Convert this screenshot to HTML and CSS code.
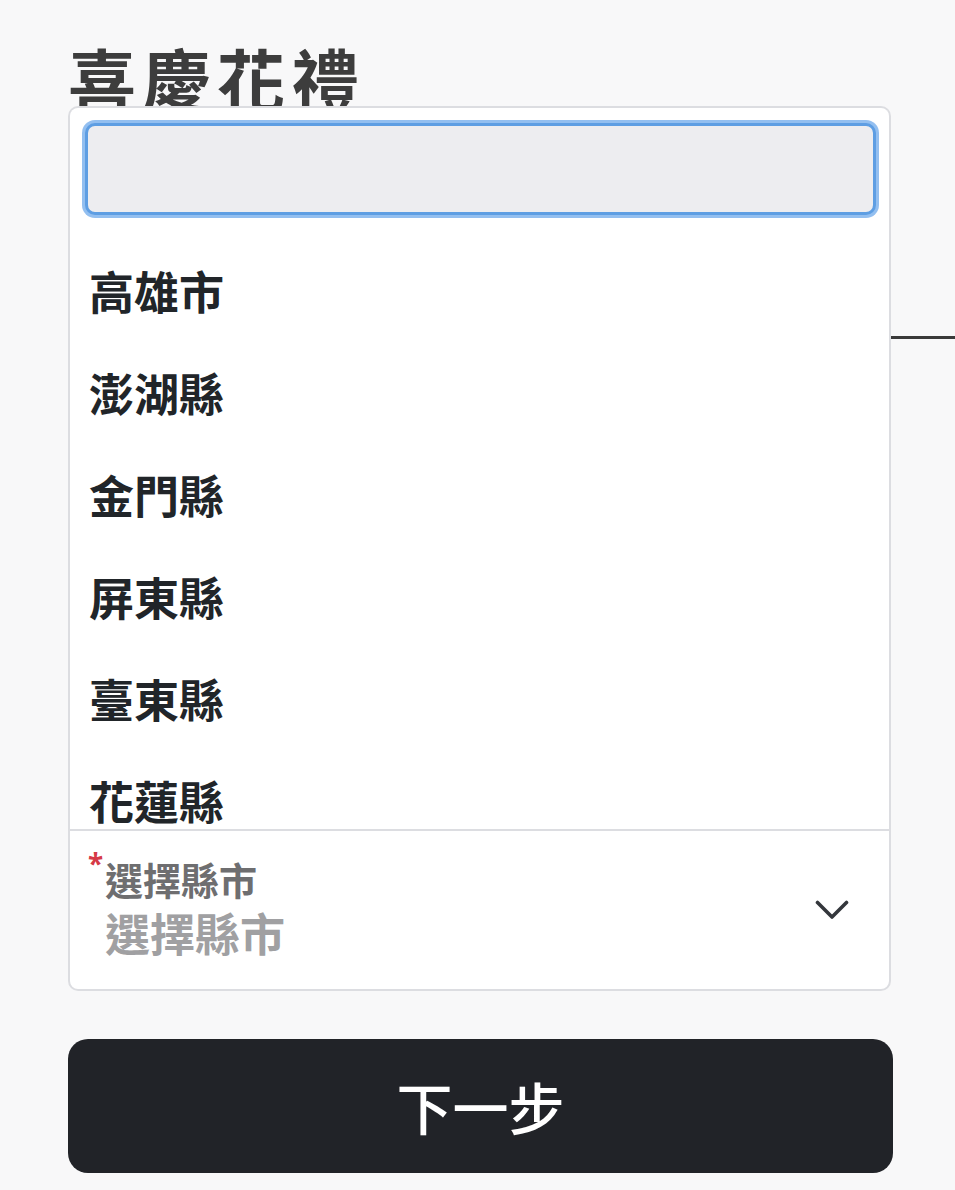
FILE: index.html
```html
<!DOCTYPE html>
<html lang="zh-Hant">
<head>
<meta charset="utf-8">
<title>喜慶花禮</title>
<link rel="stylesheet" href="styles.css">
</head>
<body>
<div class="page">
  <h1 class="title">喜慶花禮</h1>
  <div class="tab-line"></div>
  <div class="select">
    <div class="menu">
      <input class="search" type="text" aria-label="搜尋縣市">
      <ul class="options">
        <li>高雄市</li>
        <li>澎湖縣</li>
        <li>金門縣</li>
        <li>屏東縣</li>
        <li>臺東縣</li>
        <li>花蓮縣</li>
        <li>宜蘭縣</li>
      </ul>
    </div>
    <div class="field">
      <div class="field-body">
        <div class="label"><span class="req">*</span><span>選擇縣市</span></div>
        <div class="value">選擇縣市</div>
      </div>
      <svg class="chevron" width="34" height="20" viewBox="0 0 34 20" aria-hidden="true">
        <polyline points="2.5,2.5 17,17 31.5,2.5" fill="none" stroke="#34373c" stroke-width="3.6" stroke-linecap="round" stroke-linejoin="round"/>
      </svg>
    </div>
  </div>
  <button class="next" type="button">下一步</button>
</div>
</body>
</html>
```

FILE: styles.css
```css
* {
  box-sizing: border-box;
}

html, body {
  margin: 0;
  padding: 0;
  background: #f8f8f9;
}

body {
  font-family: "Noto Sans CJK TC", "Noto Sans", sans-serif;
  height: 1190px;
  overflow: hidden;
}

.page {
  padding: 44px 62px 0 68px;
}

.title {
  margin: 0;
  font-size: 68px;
  line-height: 68px;
  font-weight: 700;
  letter-spacing: 6.5px;
  color: #3d3d3d;
}

.tab-line {
  margin-top: 224px;
  margin-right: -62px;
  height: 0;
  border-bottom: 3px solid #3a3a3a;
}

.select {
  position: relative;
  margin-top: 490px;
  margin-right: 2px;
}

.menu {
  position: absolute;
  left: 0;
  right: 0;
  bottom: 100%;
  height: 723px;
  display: flex;
  flex-direction: column;
  background: #ffffff;
  border: 2px solid #dcdde1;
  border-bottom: none;
  border-radius: 10px 10px 0 0;
  padding: 15px 13px 0 15px;
}

.search {
  display: block;
  width: 100%;
  height: 92px;
  flex: none;
  border: 3px solid #5e9ee3;
  border-radius: 10px;
  background: #ededf0;
  box-shadow: 0 0 0 3px rgba(120, 175, 236, 0.8);
  outline: none;
  font-family: inherit;
  font-size: 40px;
}

.options {
  list-style: none;
  margin: 25px 0 0 -15px;
  padding: 0;
  flex: 1;
  overflow: hidden;
}

.options li {
  height: 102px;
  line-height: 102px;
  padding-left: 19px;
  font-size: 45px;
  font-weight: 700;
  color: #212529;
}

.field {
  display: flex;
  align-items: center;
  height: 162px;
  background: #ffffff;
  border: 2px solid #dcdde1;
  border-radius: 0 0 10px 10px;
  padding: 0 40px 0 18px;
}

.field-body {
  flex: 1;
  padding-bottom: 4.5px;
}

.label {
  display: flex;
  align-items: flex-start;
  font-size: 38px;
  line-height: 40px;
  font-weight: 700;
  color: #6e6e70;
}

.req {
  width: 17px;
  flex: none;
  margin-top: -10px;
  font-family: "Noto Sans", sans-serif;
  font-size: 28px;
  line-height: 28px;
  color: #d63a47;
}

.value {
  margin-top: 10.5px;
  margin-left: 17px;
  font-size: 45px;
  line-height: 48px;
  font-weight: 700;
  color: #a0a0a2;
}

.chevron {
  display: block;
  flex: none;
}

.next {
  display: block;
  width: 100%;
  height: 134px;
  margin-top: 48px;
  border: none;
  border-radius: 20px;
  background: #212328;
  color: #ffffff;
  font-family: "Noto Sans CJK TC", "Noto Sans", sans-serif;
  font-size: 56px;
  font-weight: 500;
  line-height: 1;
  padding: 0;
}
```
